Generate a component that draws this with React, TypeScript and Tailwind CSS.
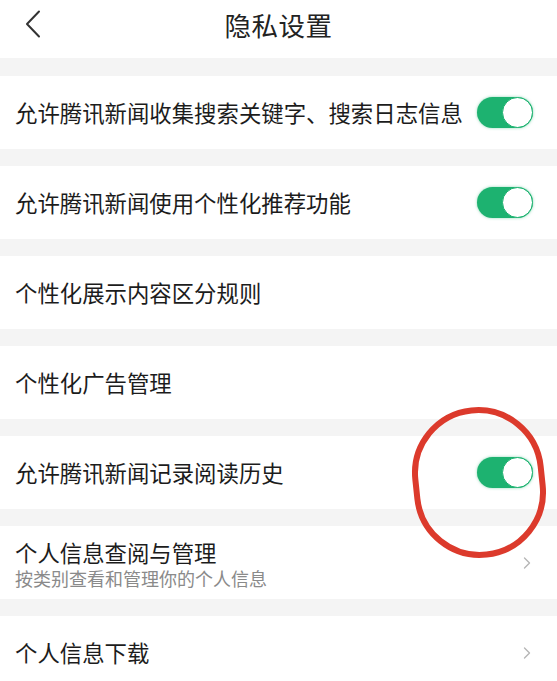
import { ChevronRight } from "lucide-react";

type Row = {
  title: string;
  subtitle?: string;
  kind: "toggle" | "arrow" | "none";
};

const rows: Row[] = [
  { title: "允许腾讯新闻收集搜索关键字、搜索日志信息", kind: "toggle" },
  { title: "允许腾讯新闻使用个性化推荐功能", kind: "toggle" },
  { title: "个性化展示内容区分规则", kind: "none" },
  { title: "个性化广告管理", kind: "none" },
  { title: "允许腾讯新闻记录阅读历史", kind: "toggle" },
  { title: "个人信息查阅与管理", subtitle: "按类别查看和管理你的个人信息", kind: "arrow" },
  { title: "个人信息下载", kind: "arrow" },
];

const Toggle = () => (
  <div className="flex h-[31px] w-[56px] items-center justify-end rounded-full bg-[#1db270] shadow-[0_0_3px_rgba(31,177,111,0.5)]">
    <div className="h-[31px] w-[31px] rounded-full border-[1.5px] border-[#1db270] bg-white" />
  </div>
);

const App = () => {
  return (
    <div
      className="relative min-h-[681px] w-full overflow-hidden bg-[#f4f4f4] text-[#1c1c1c]"
      style={{ fontFamily: '"Noto Sans CJK SC", "Noto Sans", sans-serif' }}
    >
      {/* Header */}
      <div className="relative flex h-[58px] items-center justify-center bg-white pb-[8px]">
        <svg className="absolute left-[24px] top-[10px]" width="18" height="28" viewBox="0 0 18 28" fill="none">
          <polyline points="15,1.5 3,14 15,26.5" stroke="#333" strokeWidth="2" strokeLinecap="round" strokeLinejoin="round" />
        </svg>
        <h1 className="text-[26.5px] leading-none tracking-[0.5px] text-[#222]">隐私设置</h1>
      </div>

      <div className="flex flex-col gap-[17px] pt-[18px]">
        {rows.map((row, index) => (
          <div key={index} className="flex h-[73px] items-center justify-between bg-white pl-[15px] pr-[24px]">
            {row.subtitle ? (
              <div className="flex flex-col pt-[2px]">
                <span className="text-[22.4px] leading-[28px]">{row.title}</span>
                <span className="text-[18px] leading-[24px] text-[#8a8a8a]">{row.subtitle}</span>
              </div>
            ) : (
              <span className="text-[22.4px] leading-none">{row.title}</span>
            )}
            {row.kind === "toggle" && <Toggle />}
            {row.kind === "arrow" && (
              <ChevronRight className="mr-[-4px] h-[20px] w-[20px] text-[#b5b5b5]" strokeWidth={1.6} />
            )}
          </div>
        ))}
      </div>

      {/* hand-drawn red circle */}
      <div className="absolute left-[413px] top-[407px] h-[151px] w-[132px] rotate-[-6deg] rounded-full border-[6px] border-[#dc3a2c]" />
    </div>
  );
};

export default App;
